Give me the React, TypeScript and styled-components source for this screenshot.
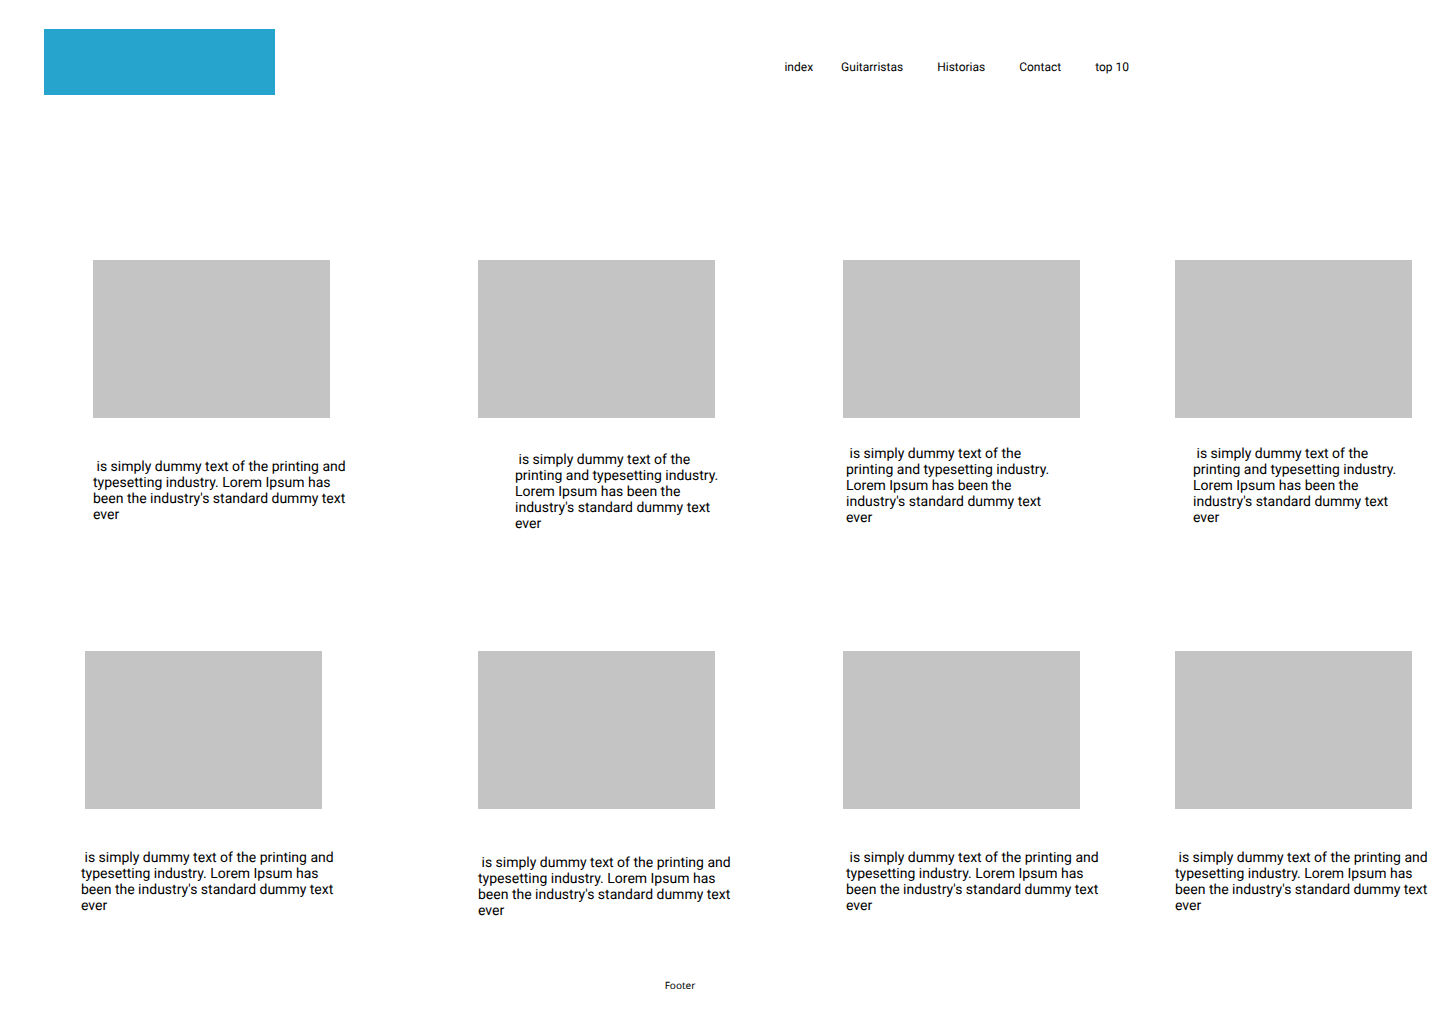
import React from "react";
import styled, { createGlobalStyle } from "styled-components";

const GlobalStyle = createGlobalStyle`
  *, *::before, *::after { box-sizing: border-box; }
  body {
    margin: 0;
    background: #ffffff;
    color: #000000;
    font-family: Roboto, "Liberation Sans", sans-serif;
    text-rendering: geometricPrecision;
  }
`;

const Page = styled.div`
  display: flex;
  flex-direction: column;
  min-height: 100vh;
`;

const Header = styled.header`
  display: flex;
  align-items: flex-start;
  justify-content: space-between;
  padding: 29px 311px 0 44px;
`;

const Logo = styled.a`
  display: block;
  flex: none;
  width: 231px;
  height: 66px;
  background: #26a4ce;
`;

const Nav = styled.nav`
  display: flex;
  gap: 28px;
  padding-top: 31px;
`;

const Sections = styled.div`
  display: flex;
  gap: 34px;
`;

const NavLink = styled.a`
  color: inherit;
  font-size: 12px;
  line-height: 14px;
  text-decoration: none;
  white-space: nowrap;
`;

const Gallery = styled.main`
  display: grid;
  grid-template-columns:
    minmax(0, 397fr) minmax(0, 365fr) minmax(0, 332fr) minmax(0, 265fr);
  row-gap: 119px;
  padding: 165px 0 0 81px;
`;

const Card = styled.article<{ $gap: number }>`
  display: flex;
  flex-direction: column;
  align-items: flex-start;
  gap: ${(p) => p.$gap}px;
`;

const Picture = styled.div<{ $indent: number }>`
  width: 237px;
  height: 158px;
  margin-left: ${(p) => p.$indent}px;
  background: #c4c4c4;
`;

const Caption = styled.p<{ $indent: number; $narrow: boolean }>`
  width: ${(p) => (p.$narrow ? 210 : 258)}px;
  margin: 0 0 0 ${(p) => p.$indent}px;
  font-size: 14px;
  line-height: 16px;
  white-space: pre-wrap;
`;

const Footer = styled.footer`
  padding: 59px 80px 32px 0;
  font-family: "Noto Sans", "Open Sans", sans-serif;
  font-size: 10px;
  line-height: 14px;
  text-align: center;
`;

const text =
  " is simply dummy text of the printing and typesetting industry. Lorem Ipsum has been the industry's standard dummy text ever";

const links = ["Guitarristas", "Historias", "Contact", "top 10"];

const cards = [
  { gap: 41, picture: 12, caption: 12, narrow: false },
  { gap: 34, picture: 0, caption: 37, narrow: true },
  { gap: 28, picture: 0, caption: 3, narrow: true },
  { gap: 28, picture: 0, caption: 18, narrow: true },
  { gap: 41, picture: 4, caption: 0, narrow: false },
  { gap: 46, picture: 0, caption: 0, narrow: false },
  { gap: 41, picture: 0, caption: 3, narrow: false },
  { gap: 41, picture: 0, caption: 0, narrow: false },
];

export default function App() {
  return (
    <>
      <GlobalStyle />
      <Page>
        <Header>
          <Logo href="#" aria-label="index" />
          <Nav>
            <NavLink href="#">index</NavLink>
            <Sections>
              {links.map((link) => (
                <NavLink key={link} href="#">
                  {link}
                </NavLink>
              ))}
            </Sections>
          </Nav>
        </Header>
        <Gallery>
          {cards.map((card, i) => (
            <Card key={i} $gap={card.gap}>
              <Picture $indent={card.picture} />
              <Caption $indent={card.caption} $narrow={card.narrow}>
                {text}
              </Caption>
            </Card>
          ))}
        </Gallery>
        <Footer>Footer</Footer>
      </Page>
    </>
  );
}
